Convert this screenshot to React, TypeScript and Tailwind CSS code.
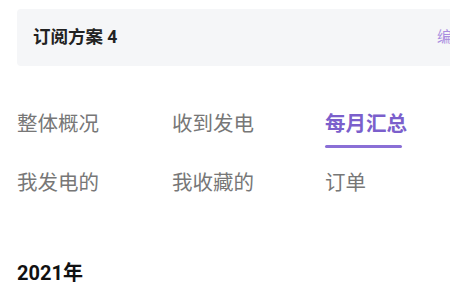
import React from 'react';

const tabs = [
  { label: '整体概况', active: false },
  { label: '收到发电', active: false },
  { label: '每月汇总', active: true },
  { label: '我发电的', active: false },
  { label: '我收藏的', active: false },
  { label: '订单', active: false },
];

const App: React.FC = () => {
  return (
    <div
      className="w-[450px] h-[300px] overflow-hidden bg-white"
      style={{ fontFamily: 'Roboto, "Noto Sans CJK SC", sans-serif' }}
    >
      <div className="pt-[9px] pl-[17px]">
        <div className="w-[480px] h-[57px] bg-[#f5f6f8] rounded-[4px] flex items-center justify-between pl-[16px] pr-[20px]">
          <span className="text-[17.5px] font-bold text-[#222] leading-none">订阅方案 4</span>
          <span className="text-[15px] text-[#a98ee0] leading-none mr-[10px]">编辑</span>
        </div>
      </div>

      <div className="grid grid-cols-[155px_153px_150px] pl-[17px] mt-[41px] gap-y-[18px]">
        {tabs.map(tab => (
          <div key={tab.label} className="flex flex-col items-start">
            <span
              className={
                tab.active
                  ? 'text-[20.5px] leading-[34px] font-bold text-[#7b5fcc]'
                  : 'text-[20.5px] leading-[34px] text-[#777]'
              }
            >
              {tab.label}
            </span>
            <div className={tab.active ? 'mt-[4px] h-[3px] w-[77px] bg-[#8a6fd6] rounded-full' : 'mt-[4px] h-[3px]'} />
          </div>
        ))}
      </div>

      <div className="pl-[17px] mt-[56px]">
        <span className="text-[20px] font-bold text-[#111] leading-none">2021年</span>
      </div>
    </div>
  );
};

export default App;
